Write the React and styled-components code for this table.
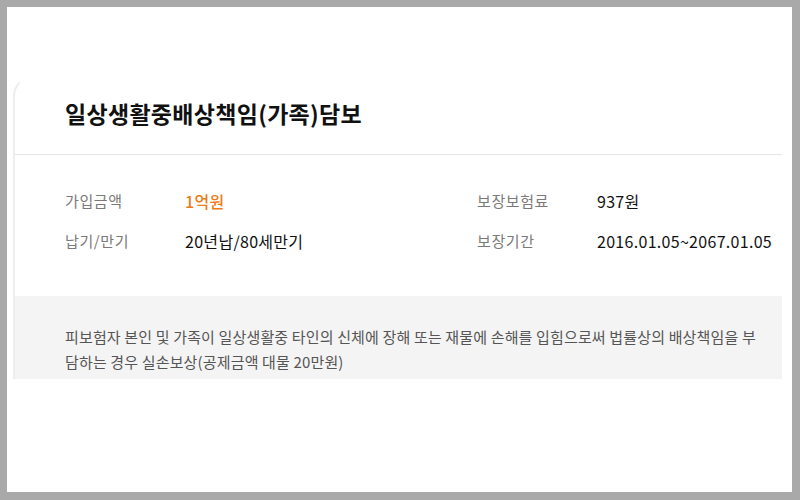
import React from "react";
import styled, { createGlobalStyle } from "styled-components";

const GlobalStyle = createGlobalStyle`
  html {
    background: #a9a9a9;
  }
  body {
    margin: 7px 8px 8px 7px;
    height: 485px;
    background: #fff;
    font-family: "Noto Sans CJK KR", "Noto Sans", sans-serif;
  }
`;

const rows = [
  [
    { label: "가입금액", value: "1억원", accent: true },
    { label: "보장보험료", value: "937원" },
  ],
  [
    { label: "납기/만기", value: "20년납/80세만기" },
    { label: "보장기간", value: "2016.01.05~2067.01.05" },
  ],
];

function App() {
  return (
    <Page>
      <GlobalStyle />
      <Card>
        <Header>
          <Title>일상생활중배상책임(가족)담보</Title>
        </Header>
        <Info>
          {rows.map((row, i) => (
            <Row key={i}>
              {row.map((item) => (
                <Field key={item.label}>
                  <Label>{item.label}</Label>
                  <Value $accent={item.accent}>{item.value}</Value>
                </Field>
              ))}
            </Row>
          ))}
        </Info>
        <Desc>
          피보험자 본인 및 가족이 일상생활중 타인의 신체에 장해 또는 재물에
          손해를 입힘으로써 법률상의 배상책임을 부담하는 경우 실손보상(공제금액
          대물 20만원)
        </Desc>
      </Card>
    </Page>
  );
}

const Page = styled.div`
  padding: 69px 10px 0 6px;
`;

const Card = styled.div`
  border-left: 2px solid #eeeeee;
  border-top: 2px solid transparent;
  border-top-left-radius: 20px;
`;

const Header = styled.div`
  padding: 18px 50px 24px;
  border-bottom: 1px solid #e6e6e6;
`;

const Title = styled.h2`
  margin: 0;
  font-size: 23px;
  line-height: 34px;
  font-weight: 700;
  color: #111;
  letter-spacing: 0.3px;
`;

const Info = styled.div`
  display: flex;
  flex-direction: column;
  gap: 16px;
  padding: 34px 50px 43px;
`;

const Row = styled.div`
  display: grid;
  grid-template-columns: 412px 1fr;
`;

const Field = styled.div`
  display: flex;
  align-items: center;
`;

const Label = styled.span`
  width: 120px;
  flex-shrink: 0;
  font-size: 15px;
  line-height: 24px;
  color: #7a7a7a;
  letter-spacing: 0.6px;
`;

const Value = styled.span`
  font-size: 16px;
  line-height: 24px;
  color: ${(p) => (p.$accent ? "#ef7b17" : "#111")};
  font-weight: ${(p) => (p.$accent ? 500 : 400)};
  letter-spacing: 0.3px;
`;

const Desc = styled.p`
  margin: 0;
  background: #f4f4f4;
  padding: 28px 25px 5px 50px;
  font-size: 15px;
  line-height: 25px;
  color: #555;
  letter-spacing: 0.15px;
`;

export default App;
